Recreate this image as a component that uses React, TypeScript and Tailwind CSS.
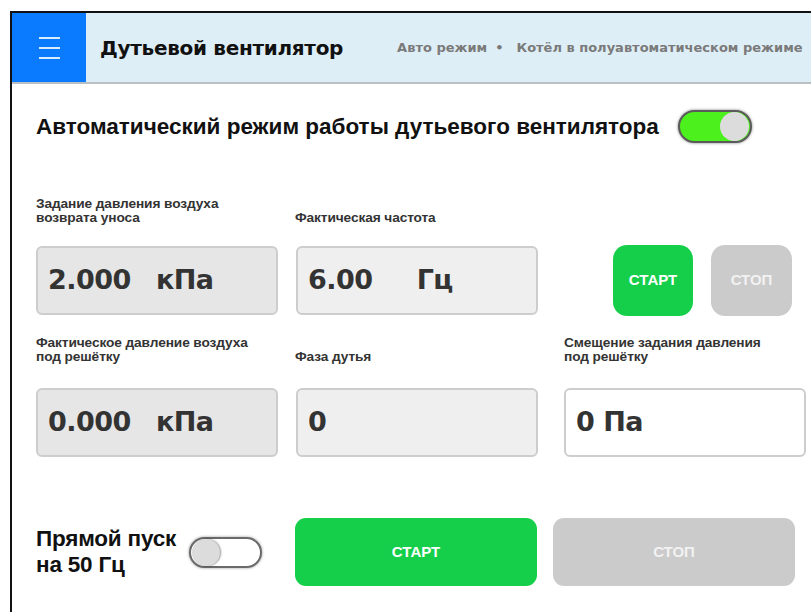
import React from 'react';

const narrow = "font-['Liberation_Sans','Arial',sans-serif]";
const wide = "font-['DejaVu_Sans','Verdana',sans-serif]";

const Field: React.FC<{ value: string; unit?: string; tone?: 'dark' | 'light' | 'white'; wideGap?: boolean }> = ({ value, unit, tone = 'light', wideGap }) => {
  const bg = tone === 'dark' ? 'bg-[#e6e6e6]' : tone === 'white' ? 'bg-white' : 'bg-[#efefef]';
  return (
    <div className={`h-[69px] w-[242px] rounded-[6px] border-2 border-[#cdcdcd] ${bg} flex items-center pl-[10px] text-[#333] ${wide} font-bold text-[27px] tracking-[-0.5px]`}>
      <span>{value}</span>
      {unit && <span className={wideGap ? 'ml-[44px]' : 'ml-[25px]'}>{unit}</span>}
    </div>
  );
};

const Label: React.FC<{ lines: string[] }> = ({ lines }) => (
  <div className={`${narrow} font-bold text-[13.7px] leading-[14px] text-[#333] h-[28px] flex flex-col justify-end tracking-[-0.1px]`}>
    {lines.map((l) => (
      <span key={l}>{l}</span>
    ))}
  </div>
);

const Toggle: React.FC<{ on?: boolean }> = ({ on }) =>
  on ? (
    <div className="w-[74px] h-[33px] rounded-full bg-[#4cf01c] border-2 border-[#5a5a5a] shadow-[0_0_3px_rgba(0,0,0,0.5)] flex items-center justify-end pr-[1px]">
      <div className="w-[29px] h-[29px] rounded-full bg-[#dcdcdc]" />
    </div>
  ) : (
    <div className="w-[73px] h-[31px] rounded-full bg-white border-2 border-[#6a6a6a] shadow-[0_0_3px_rgba(0,0,0,0.4)] flex items-center pl-[1px]">
      <div className="w-[28px] h-[27px] rounded-full bg-[#dcdcdc] shadow-[1px_0_2px_rgba(0,0,0,0.4)]" />
    </div>
  );

export default function App() {
  return (
    <div className="w-[811px] h-[612px] bg-white pt-[11px] pl-[10px] overflow-hidden">
      <div className="h-full border-l-2 border-t-2 border-[#111]">
        {/* header */}
        <div className="h-[71px] flex bg-[#deeef6] border-b-2 border-[#b9bfc3]">
          <div className="w-[74px] shrink-0 bg-[#0a7bff] flex flex-col items-center justify-center gap-[8px]">
            <div className="w-[21px] h-[2px] bg-[#d9ecff]" />
            <div className="w-[21px] h-[2px] bg-[#d9ecff]" />
            <div className="w-[21px] h-[2px] bg-[#d9ecff]" />
          </div>
          <div className="flex items-center pl-[14px] whitespace-nowrap">
            <span className={`${wide} font-bold text-[20px] text-[#111] tracking-[-0.3px]`}>Дутьевой вентилятор</span>
            <span className={`${wide} font-bold text-[13px] text-[#7a7a7a] ml-[54px]`}>Авто режим</span>
            <span className={`${wide} font-bold text-[13px] text-[#7a7a7a] ml-[8px]`}>•</span>
            <span className={`${wide} font-bold text-[13px] text-[#7a7a7a] ml-[13px]`}>Котёл в полуавтоматическом режиме</span>
          </div>
        </div>

        {/* body */}
        <div className="pl-[24px]">
          <div className="flex items-center mt-[25px] h-[35px]">
            <span className={`${narrow} font-bold text-[22.5px] text-[#111]`}>Автоматический режим работы дутьевого вентилятора</span>
            <div className="ml-[19px]">
              <Toggle on />
            </div>
          </div>

          <div className="flex mt-[53px]">
            <div className="w-[259px]">
              <Label lines={['Задание давления воздуха', 'возврата уноса']} />
            </div>
            <Label lines={['Фактическая частота']} />
          </div>

          <div className="flex items-center mt-[20px]">
            <Field value="2.000" unit="кПа" tone="dark" />
            <div className="ml-[18px]">
              <Field value="6.00" unit="Гц" wideGap />
            </div>
            <button className={`ml-[75px] w-[80px] h-[71px] rounded-[14px] bg-[#15cf4b] text-white ${narrow} font-bold text-[15px]`}>СТАРТ</button>
            <button className={`ml-[18px] w-[81px] h-[71px] rounded-[14px] bg-[#cbcbcb] text-[#f2f2f2] ${narrow} font-bold text-[15px]`}>СТОП</button>
          </div>

          <div className="flex mt-[20px]">
            <div className="w-[259px]">
              <Label lines={['Фактическое давление воздуха', 'под решётку']} />
            </div>
            <div className="w-[269px]">
              <Label lines={['Фаза дутья']} />
            </div>
            <Label lines={['Смещение задания давления', 'под решётку']} />
          </div>

          <div className="flex mt-[24px]">
            <Field value="0.000" unit="кПа" tone="dark" />
            <div className="ml-[18px]">
              <Field value="0" />
            </div>
            <div className="ml-[26px]">
              <Field value="0 Па" tone="white" />
            </div>
          </div>

          <div className="flex items-center mt-[61px]">
            <div className={`${narrow} font-bold text-[22.5px] leading-[26px] text-[#111] w-[153px] tracking-[-0.2px]`}>
              <div>Прямой пуск</div>
              <div>на 50 Гц</div>
            </div>
            <Toggle />
            <button className={`ml-[33px] w-[242px] h-[68px] rounded-[11px] bg-[#15cf4b] text-white ${narrow} font-bold text-[15px]`}>СТАРТ</button>
            <button className={`ml-[16px] w-[242px] h-[68px] rounded-[11px] bg-[#cbcbcb] text-[#f2f2f2] ${narrow} font-bold text-[15px]`}>СТОП</button>
          </div>
        </div>
      </div>
    </div>
  );
}
